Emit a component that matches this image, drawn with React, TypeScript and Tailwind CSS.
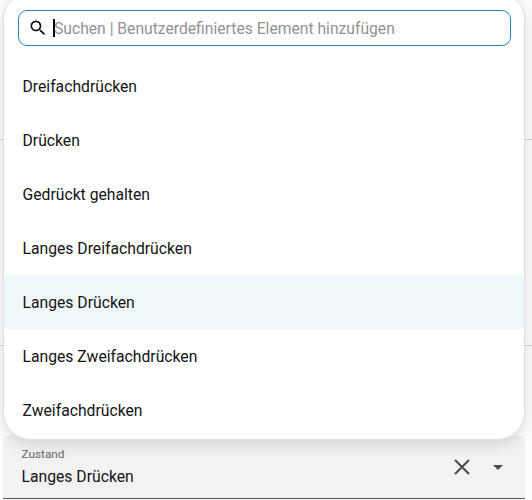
const options = [
  { label: "Dreifachdrücken" },
  { label: "Drücken" },
  { label: "Gedrückt gehalten" },
  { label: "Langes Dreifachdrücken" },
  { label: "Langes Drücken", selected: true },
  { label: "Langes Zweifachdrücken" },
  { label: "Zweifachdrücken" },
];

function SearchField() {
  return (
    <div className="ml-[14px] mr-[13.5px] flex h-9 items-center rounded-[9px] border border-[#2589bf] bg-white pl-[9px]">
      <svg viewBox="0 0 24 24" className="size-5 shrink-0" fill="#111">
        <path d="M15.5 14h-.79l-.28-.27A6.471 6.471 0 0 0 16 9.5 6.5 6.5 0 1 0 9.5 16c1.61 0 3.09-.59 4.23-1.57l.27.28v.79l5 4.99L20.49 19l-4.99-5zm-6 0C7.01 14 5 11.99 5 9.5S7.01 5 9.5 5 14 7.01 14 9.5 11.99 14 9.5 14z" />
      </svg>
      <span className="ml-[5px] h-[18px] w-[2px] shrink-0 bg-black" />
      <span className="-ml-px whitespace-nowrap pt-px text-[15.68px] leading-6 text-[#929292]">
        Suchen | Benutzerdefiniertes Element hinzufügen
      </span>
    </div>
  );
}

function OptionMenu() {
  return (
    <div className="absolute -top-2 left-[3px] h-[448px] w-[522px] overflow-hidden rounded-[28px] border border-[#e0e0e0] bg-white pt-[17px] shadow-[0_4px_16px_rgba(0,0,0,0.14)]">
      <SearchField />
      <ul className="mt-[13px]">
        {options.map((o) => (
          <li
            key={o.label}
            className={`flex h-[54px] items-center whitespace-nowrap pl-[18.5px] pt-[2px] text-[15.72px] ${o.selected ? "bg-[#f0f8fc]" : ""}`}
          >
            {o.label}
          </li>
        ))}
      </ul>
    </div>
  );
}

export default function App() {
  return (
    <div className="relative flex h-[500px] w-[532px] flex-col overflow-hidden bg-[#fefefe] font-['Roboto',sans-serif] text-[#141414]">
      <div className="h-[140px] border-b border-[#d4d4d4]" />
      <div className="h-[206px] border-b border-[#d4d4d4]" />
      <div className="h-[90px]" />
      <div className="ml-[3px] w-[522px] border-b border-[#555]">
        <div className="flex h-[62px] items-center rounded-t bg-[#f2f2f2] pl-[18.5px]">
          <div className="flex-1 pb-[2px]">
            <div className="mt-[2px] text-[11.8px] leading-4 text-[#666]">Zustand</div>
            <div className="mt-[3px] text-[15.72px] leading-6">Langes Drücken</div>
          </div>
          <svg viewBox="0 0 24 24" className="size-6" fill="none" stroke="#4a4a4a" strokeWidth="2">
            <path d="M5 5l14 14M19 5L5 19" />
          </svg>
          <svg viewBox="0 0 24 24" className="mr-[15px] ml-3 size-6" fill="#4a4a4a">
            <path d="M7 10l5 5 5-5z" />
          </svg>
        </div>
      </div>
      <OptionMenu />
    </div>
  );
}
